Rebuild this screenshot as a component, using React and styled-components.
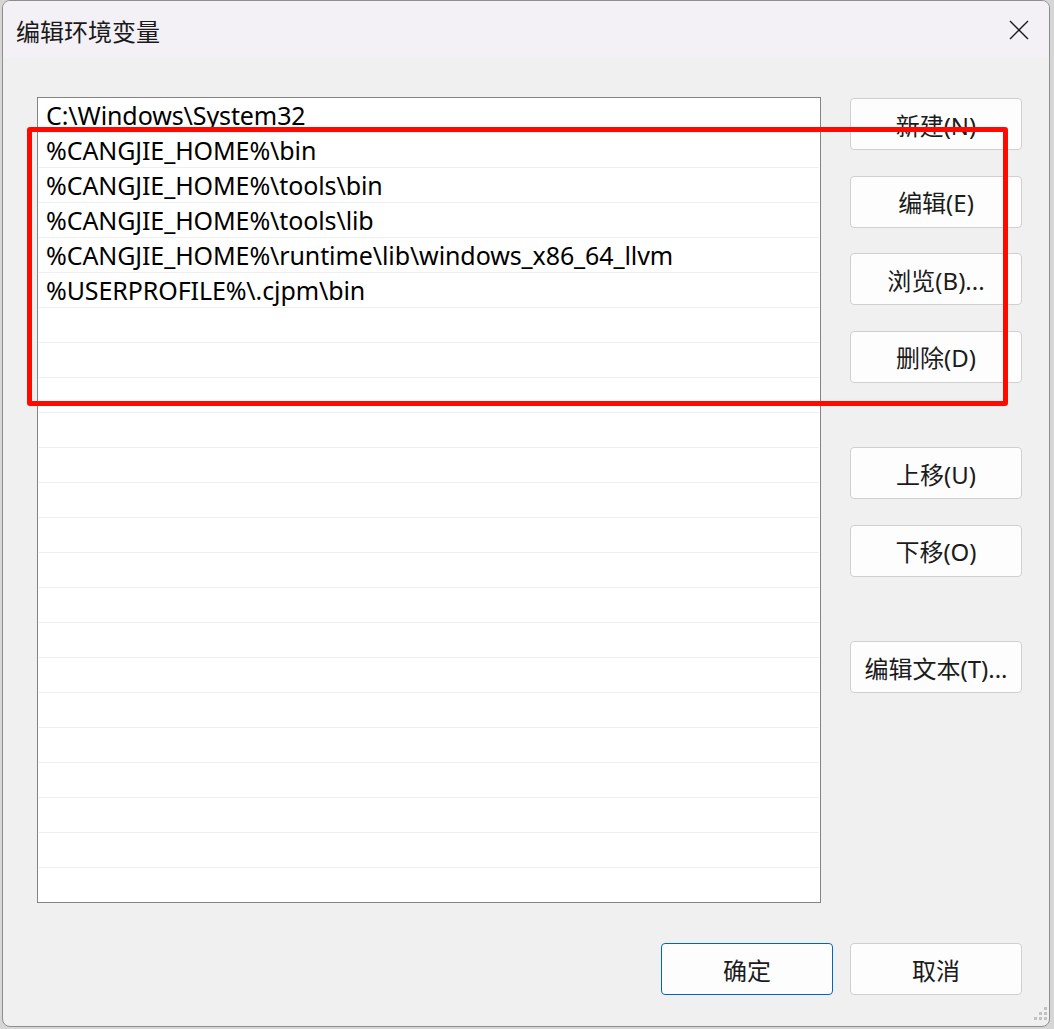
import React from 'react'
import styled, { createGlobalStyle } from 'styled-components'

const Global = createGlobalStyle`
  html, body {
    margin: 0;
    padding: 0;
    background: #d6d6d6;
  }
  * { box-sizing: border-box; }
`

const paths = [
  'C:\\Windows\\System32',
  '%CANGJIE_HOME%\\bin',
  '%CANGJIE_HOME%\\tools\\bin',
  '%CANGJIE_HOME%\\tools\\lib',
  '%CANGJIE_HOME%\\runtime\\lib\\windows_x86_64_llvm',
  '%USERPROFILE%\\.cjpm\\bin',
]

const TOTAL_ROWS = 23

const sideButtons = [
  { label: '新建(N)' },
  { label: '编辑(E)' },
  { label: '浏览(B)...' },
  { label: '删除(D)' },
  { label: '上移(U)', group: true },
  { label: '下移(O)' },
  { label: '编辑文本(T)...', group: true },
]

export default function App() {
  const rows = Array.from({ length: TOTAL_ROWS }, (_, i) => paths[i] || '')

  return (
    <>
      <Global />
      <Window>
        <TitleBar>
          <Title>编辑环境变量</Title>
          <CloseButton aria-label="关闭">
            <svg width="20" height="20" viewBox="0 0 20 20">
              <path d="M1 1 L19 19 M19 1 L1 19" stroke="#1a1a1a" strokeWidth="1.4" fill="none" />
            </svg>
          </CloseButton>
        </TitleBar>

        <Body>
          <Main>
            <List>
              {rows.map((text, i) => (
                <Row key={i} $last={i === TOTAL_ROWS - 1}>{text}</Row>
              ))}
            </List>

            <ButtonCol>
              {sideButtons.map((b) => (
                <Button key={b.label} $group={b.group}>{b.label}</Button>
              ))}
            </ButtonCol>
          </Main>

          <Footer>
            <Button $primary>确定</Button>
            <Button>取消</Button>
          </Footer>
        </Body>

        <Highlight />

        <Grip width="16" height="16" viewBox="0 0 16 16">
          <rect x="13" y="1" width="3" height="3" fill="#c2c2c2" />
          <rect x="8" y="6" width="3" height="3" fill="#c2c2c2" />
          <rect x="13" y="6" width="3" height="3" fill="#c2c2c2" />
          <rect x="3" y="11" width="3" height="3" fill="#c2c2c2" />
          <rect x="8" y="11" width="3" height="3" fill="#c2c2c2" />
          <rect x="13" y="11" width="3" height="3" fill="#c2c2c2" />
        </Grip>
      </Window>
    </>
  )
}

const Window = styled.div`
  position: relative;
  width: 1048px;
  height: 1027px;
  margin: 0 0 0 2px;
  border: 1px solid #8e8e8e;
  border-radius: 8px;
  overflow: hidden;
  background: #f0f0f0;
  display: flex;
  flex-direction: column;
  font-family: "Noto Sans", "Noto Sans CJK SC", sans-serif;
  color: #000;
`

const TitleBar = styled.div`
  height: 57px;
  flex-shrink: 0;
  background: #f3f0f6;
  display: flex;
  align-items: center;
  justify-content: space-between;
  padding: 0 19px 0 13px;
`

const Title = styled.div`
  font-family: "Noto Sans CJK SC", sans-serif;
  font-size: 24px;
  line-height: 1;
  color: #1a1a1a;
  margin-top: 2px;
`

const CloseButton = styled.div`
  display: flex;
  align-items: center;
  justify-content: center;
  width: 22px;
  height: 22px;
  margin-top: 1px;
`

const Body = styled.div`
  flex: 1;
  display: flex;
  flex-direction: column;
  padding: 39px 27px 0 34px;
`

const Main = styled.div`
  display: flex;
  gap: 29px;
`

const List = styled.div`
  width: 784px;
  height: 806px;
  border: 1px solid #848484;
  background: #fff;
  overflow: hidden;
`

const Row = styled.div`
  height: 35px;
  margin: 0 1px;
  padding-left: 7px;
  display: flex;
  align-items: center;
  font-size: 25px;
  letter-spacing: -0.1px;
  white-space: nowrap;
  border-bottom: ${(p) => (p.$last ? 'none' : '1px solid #efefef')};
`

const ButtonCol = styled.div`
  display: flex;
  flex-direction: column;
  gap: 25.5px;
  padding-top: 1px;
`

const Button = styled.div`
  width: 172px;
  height: 52px;
  display: flex;
  align-items: center;
  justify-content: center;
  background: #fdfdfd;
  border: 1px solid ${(p) => (p.$primary ? '#0067c0' : '#d0d0d0')};
  border-radius: 4px;
  font-size: 24px;
  color: #1b1b1b;
  margin-top: ${(p) => (p.$group ? '39px' : '0')};
`

const Footer = styled.div`
  display: flex;
  justify-content: flex-end;
  gap: 17px;
  margin-top: 40px;
`

const Highlight = styled.div`
  position: absolute;
  left: 24px;
  top: 126px;
  width: 981px;
  height: 279px;
  border: 5px solid #ff0a00;
  border-radius: 3px;
  pointer-events: none;
`

const Grip = styled.svg`
  position: absolute;
  right: 2px;
  bottom: 4px;
`
